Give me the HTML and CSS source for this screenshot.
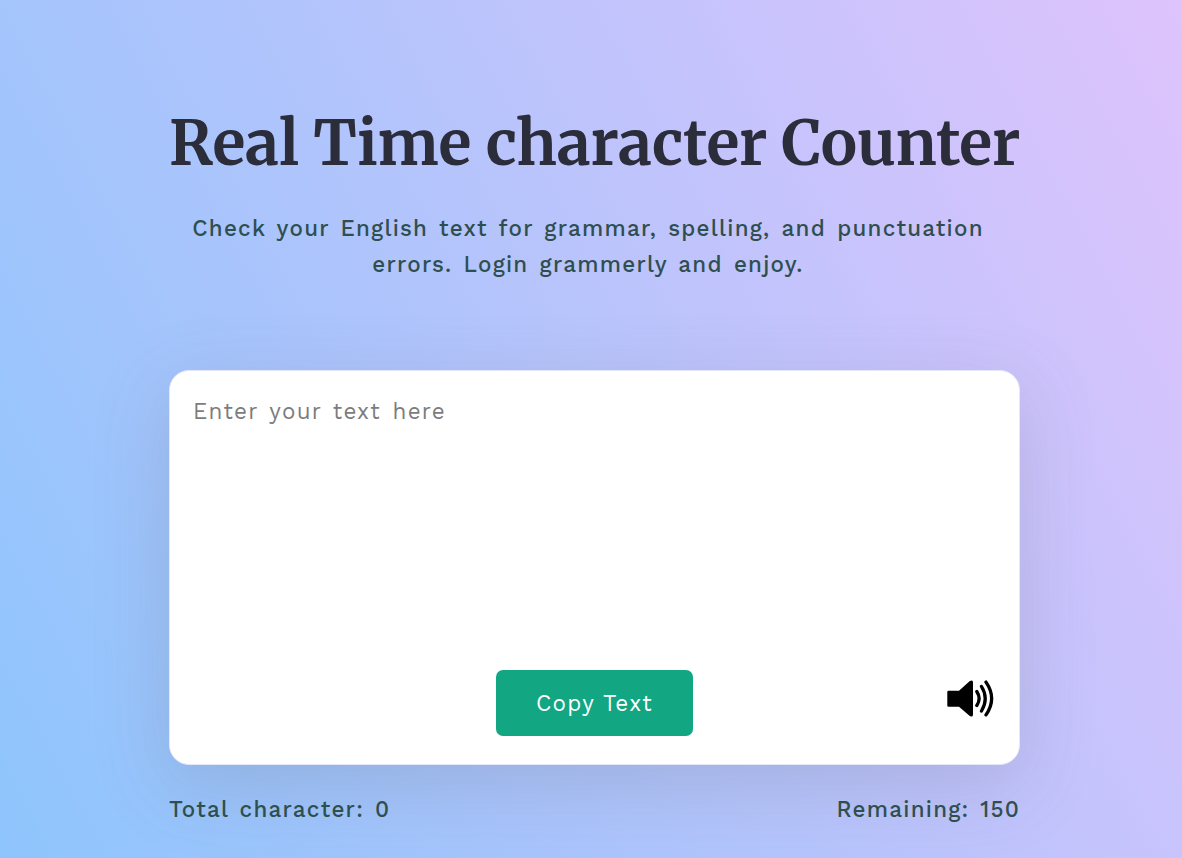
FILE: index.html
```html
<!DOCTYPE html>
<html lang="en">
<head>
<meta charset="utf-8">
<title>Real Time character Counter</title>
<link rel="stylesheet" href="styles.css">
</head>
<body>
<main class="container">
  <h1 class="title">Real Time character Counter</h1>
  <p class="subtitle">Check your English text for grammar, spelling, and punctuation<br>errors. Login grammerly and enjoy.</p>
  <section class="card">
    <textarea class="input" placeholder="Enter your text here"></textarea>
    <div class="actions">
      <button class="copy" type="button">Copy Text</button>
      <svg class="speaker" width="50" height="40" viewBox="0 -0.5 50 40" aria-label="Read aloud">
        <path d="M3.500 11.300H14L24.500 1.800Q28 -.2 28 2.700V35.300Q28 38.300 24.500 36.200L14 27.300H3.500Q2.300 27.300 2.300 26.100V12.500Q2.300 11.300 3.500 11.300Z"/>
        <path class="wave" d="M31.800 12Q36.500 19 31.800 26M36.500 7Q44 19 36.500 31.500M41 2.600Q52.300 19 41 35.400"/>
      </svg>
    </div>
  </section>
  <div class="stats">
    <p class="total">Total character: <span>0</span></p>
    <p class="remaining">Remaining: <span>150</span></p>
  </div>
</main>
</body>
</html>
```
FILE: styles.css
```css
* { box-sizing: border-box; margin: 0; padding: 0; }
body {
  min-height: 100vh;
  overflow: hidden;
  background: linear-gradient(62deg, #8ec5fc 0%, #e0c3fc 102%);
  font-family: "Work Sans", Inter, "Liberation Sans", sans-serif;
  color: #2f4f4f;
  font-size: 22.4px;
}
.container { width: 851px; margin-left: 169px; padding-top: 104px; }
.title {
  height: 80px;
  line-height: 80px;
  font-family: Merriweather, "DejaVu Serif", serif;
  font-size: 60.8px;
  font-weight: 700;
  letter-spacing: -0.05px;
  color: #2b2d3a;
  white-space: nowrap;
}
.subtitle {
  margin-top: 26px;
  height: 72px;
  padding-right: 13px;
  line-height: 36px;
  text-align: center;
  white-space: nowrap;
  font-weight: 500;
  letter-spacing: 1.25px;
  word-spacing: 2.6px;
}
.card {
  margin-top: 88px;
  height: 395px;
  display: flex;
  flex-direction: column;
  background: #fff;
  border: 1px solid #e4e6fa;
  border-radius: 20px;
  box-shadow: 0 20px 75px rgba(100, 100, 111, .21);
}
.input {
  flex: 1;
  padding: 23px 23px 0;
  border: 0;
  border-radius: 20px;
  outline: 0;
  resize: none;
  background: transparent;
  font: 400 22.4px/34px "Work Sans", Inter, sans-serif;
  letter-spacing: 1.25px;
  word-spacing: 2.7px;
}
.input::placeholder { color: #7c7c7c; }
.actions {
  display: grid;
  grid-template-columns: 1fr 197px 1fr;
  align-items: start;
  height: 94px;
}
.copy {
  grid-column: 2;
  height: 66px;
  border: 0;
  border-radius: 7px;
  background: #12a683;
  color: #fff;
  font: 400 22.4px "Work Sans", Inter, sans-serif;
  letter-spacing: 1.3px;
}
.speaker { justify-self: end; margin: 9px 24px 0 0; }
.wave { fill: none; stroke: #000; stroke-width: 3.3; stroke-linecap: round; }
.stats {
  display: flex;
  justify-content: space-between;
  margin-top: 26px;
  line-height: 36px;
  font-weight: 500;
  letter-spacing: 1.25px;
  word-spacing: 2.4px;
}
```
